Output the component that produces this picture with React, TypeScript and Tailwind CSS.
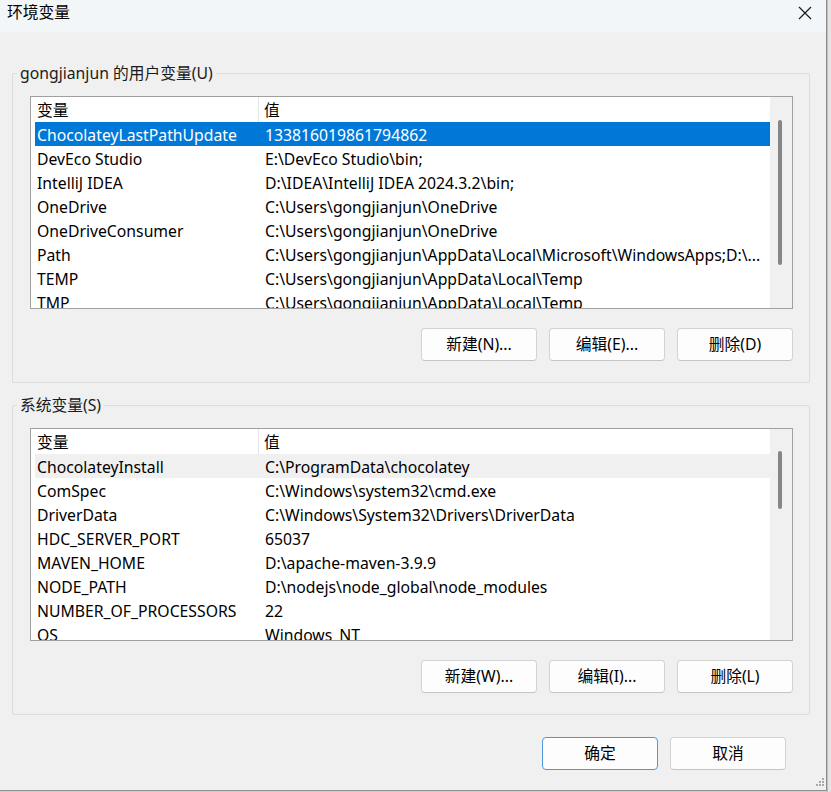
import React from "react";

const userVars = [
  ["ChocolateyLastPathUpdate", "133816019861794862"],
  ["DevEco Studio", "E:\\DevEco Studio\\bin;"],
  ["IntelliJ IDEA", "D:\\IDEA\\IntelliJ IDEA 2024.3.2\\bin;"],
  ["OneDrive", "C:\\Users\\gongjianjun\\OneDrive"],
  ["OneDriveConsumer", "C:\\Users\\gongjianjun\\OneDrive"],
  ["Path", "C:\\Users\\gongjianjun\\AppData\\Local\\Microsoft\\WindowsApps;D:\\..."],
  ["TEMP", "C:\\Users\\gongjianjun\\AppData\\Local\\Temp"],
  ["TMP", "C:\\Users\\gongjianjun\\AppData\\Local\\Temp"],
];

const sysVars = [
  ["ChocolateyInstall", "C:\\ProgramData\\chocolatey"],
  ["ComSpec", "C:\\Windows\\system32\\cmd.exe"],
  ["DriverData", "C:\\Windows\\System32\\Drivers\\DriverData"],
  ["HDC_SERVER_PORT", "65037"],
  ["MAVEN_HOME", "D:\\apache-maven-3.9.9"],
  ["NODE_PATH", "D:\\nodejs\\node_global\\node_modules"],
  ["NUMBER_OF_PROCESSORS", "22"],
  ["OS", "Windows_NT"],
];

function VarList({ rows, selected, thumbTop, thumbHeight }: { rows: string[][]; selected: "active" | "inactive"; thumbTop: number; thumbHeight: number }) {
  return (
    <div className="ml-[17px] mr-[16px] h-[213px] border border-[#a0a0a0] bg-white flex overflow-hidden">
      <div className="flex-1 flex flex-col">
        <div className="h-[25px] shrink-0 flex items-center">
          <div className="w-[228px] h-full pl-[6px] pt-[3px] flex items-center border-r border-[#e5e5e5]">变量</div>
          <div className="pl-[5px] pt-[3px]">值</div>
        </div>
        {rows.map(([name, value], i) => {
          const sel = i === 0;
          const bg = sel ? (selected === "active" ? "bg-[#0078d7] text-white" : "bg-[#f0f0f0]") : "";
          return (
            <div key={name} className={`ml-[4px] h-[24px] shrink-0 flex items-center pt-[4px] ${bg}`}>
              <div className="w-[230px] pl-[2px] whitespace-nowrap">{name}</div>
              <div className="whitespace-nowrap">{value}</div>
            </div>
          );
        })}
      </div>
      <div className="w-[22px] shrink-0 bg-[#f0f0f0] relative">
        <div
          className="absolute left-[8px] w-[4px] rounded-full bg-[#868686]"
          style={{ top: thumbTop, height: thumbHeight }}
        />
      </div>
    </div>
  );
}

function Btn({ children, primary }: { children: React.ReactNode; primary?: boolean }) {
  return (
    <button
      type="button"
      className={`w-[116px] h-[33px] rounded-[4px] bg-[#fdfdfd] flex items-center justify-center border ${
        primary ? "border-[#4d98dc]" : "border-[#d3d3d3] border-b-[#c4c4c4]"
      }`}
    >
      {children}
    </button>
  );
}

function Group({ label, children }: { label: string; children: React.ReactNode }) {
  return (
    <fieldset className="mx-[12px] w-[798px] border border-[#dcdcdc] rounded-[2px]">
      <legend className="ml-[4px] px-[3px] text-[#1a1a1a] leading-[20px]">{label}</legend>
      {children}
    </fieldset>
  );
}

export default function App() {
  return (
    <div
      className="w-[831px] h-[792px] flex bg-[#cfcfcf] text-[15.75px] text-black overflow-hidden"
      style={{ fontFamily: '"Noto Sans", "Noto Sans CJK SC", sans-serif' }}
    >
      <div className="w-[827px] h-[791px] shrink-0 bg-[#f0f0f0] border-r border-b border-[#8f8f8f] flex flex-col relative">
        {/* title bar */}
        <div className="h-[32px] shrink-0 bg-[#f3f6f9] flex items-start justify-between">
          <div className="pl-[7px] pt-[1px] leading-[22px]">环境变量</div>
          <svg className="mt-[6px] mr-[14px]" width="14" height="14" viewBox="0 0 14 14">
            <path d="M1 1 L13 13 M13 1 L1 13" stroke="#1a1a1a" strokeWidth="1.2" fill="none" />
          </svg>
        </div>

        <div className="pt-[31px] flex flex-col">
          <Group label="gongjianjun 的用户变量(U)">
            <div className="pt-[13px]">
              <VarList rows={userVars} selected="active" thumbTop={23} thumbHeight={145} />
            </div>
            <div className="mt-[19px] mb-[21px] mr-[16px] flex justify-end gap-[12px]">
              <Btn>新建(N)...</Btn>
              <Btn>编辑(E)...</Btn>
              <Btn>删除(D)</Btn>
            </div>
          </Group>

          <div className="h-[12px]" />

          <Group label="系统变量(S)">
            <div className="pt-[13px]">
              <VarList rows={sysVars} selected="inactive" thumbTop={22} thumbHeight={58} />
            </div>
            <div className="mt-[19px] mb-[21px] mr-[16px] flex justify-end gap-[12px]">
              <Btn>新建(W)...</Btn>
              <Btn>编辑(I)...</Btn>
              <Btn>删除(L)</Btn>
            </div>
          </Group>

          <div className="mt-[22px] mr-[40px] flex justify-end gap-[12px]">
            <Btn primary>确定</Btn>
            <Btn>取消</Btn>
          </div>
        </div>

        {/* resize grip */}
        <svg className="absolute right-[2px] bottom-[2px]" width="10" height="10" viewBox="0 0 10 10">
          <g fill="#a8a8a8">
            <rect x="8" y="0" width="2" height="2" />
            <rect x="5" y="3" width="2" height="2" />
            <rect x="8" y="3" width="2" height="2" />
            <rect x="2" y="6" width="2" height="2" />
            <rect x="5" y="6" width="2" height="2" />
            <rect x="8" y="6" width="2" height="2" />
          </g>
        </svg>
      </div>
      <div className="flex-1 bg-[#e4e4e4] border-l border-[#bdbdbd]" />
    </div>
  );
}
